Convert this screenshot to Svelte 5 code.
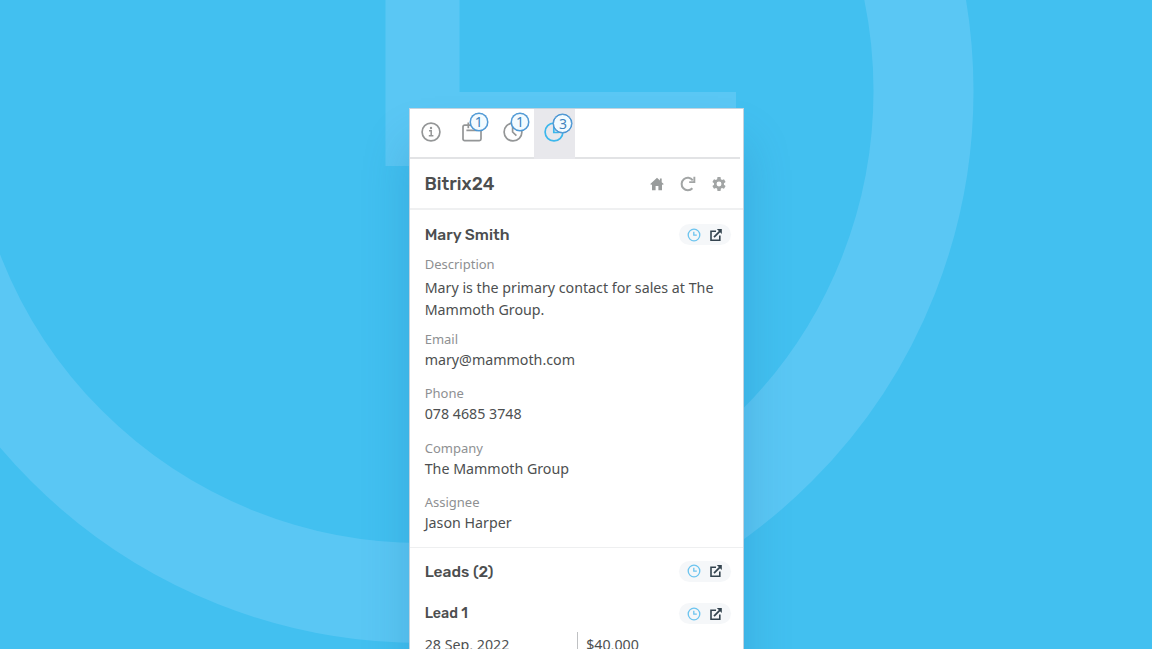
<script>
  const tabs = [
    { icon: 'info' },
    { icon: 'calendar', count: 1 },
    { icon: 'clock', count: 1 },
    { icon: 'clock', count: 3, active: true }
  ];
  const fields = [
    { label: 'Email', value: 'mary@mammoth.com' },
    { label: 'Phone', value: '078 4685 3748' },
    { label: 'Company', value: 'The Mammoth Group' },
    { label: 'Assignee', value: 'Jason Harper' }
  ];
</script>

{#snippet actions()}
  <div class="actions">
    <svg width="14" height="14" viewBox="0 0 14 14" fill="none" stroke="#6cc4ef" stroke-width="1.3">
      <circle cx="7" cy="7" r="5.8" />
      <path d="M6.8 3.8v3.4h3" />
    </svg>
    <svg width="14" height="14" viewBox="0 0 14 14" fill="none" stroke="#34444f" stroke-width="1.6">
      <path d="M7 3.2H2v9h8.8V7.6" />
      <path d="M5 9.2l6-6" stroke-width="1.8" />
      <path d="M7.8 1h5v5z" fill="#34444f" stroke="none" />
    </svg>
  </div>
{/snippet}

<main class="stage">
  <svg class="backdrop" width="1152" height="649" viewBox="0 0 1152 649" fill="none">
    <circle cx="421.5" cy="91" r="502" stroke="#5ac7f4" stroke-width="100" />
    <path d="M385.5 0H459.5V92H736V166H385.5z" fill="#5ac7f4" />
  </svg>

  <section class="card">
    <nav class="tabs">
      {#each tabs as tab}
        <div class="tab" class:active={tab.active}>
          <div class="glyph">
            <svg width="22" height="22" viewBox="0 0 22 22" fill="none" stroke="currentColor" stroke-width="1.7">
              {#if tab.icon === 'info'}
                <circle cx="11" cy="11" r="8.9" />
                <path d="M9 9.7h2.2v5.1M8.800 14.800h4.600" stroke-width="1.5" />
                <circle cx="11" cy="7" r="1.2" fill="currentColor" stroke="none" />
              {:else if tab.icon === 'calendar'}
                <rect x="2" y="4.2" width="18" height="15.5" rx="1.6" />
                <path d="M7.300 1.400v5.800M15.400 1.400v5.200M5.400 9.400h11.200" />
              {:else}
                <circle cx="11" cy="11" r="8.9" />
                {#if tab.active}
                  <path d="M10.800 5.200v6.300h5" />
                {:else}
                  <path d="M10.600 5.200v5.800l3.800 3.600" />
                {/if}
              {/if}
            </svg>
            {#if tab.count}<span class="badge">{tab.count}</span>{/if}
          </div>
        </div>
      {/each}
    </nav>

    <header class="bar">
      <h1>Bitrix24</h1>
      <div class="tools">
        <svg width="14" height="14" viewBox="0 0 14 14" fill="#999c9c">
          <path d="M7 .8L.3 7.100l.8.9.9-.7v5.900h3.600V9h2.800v4.200H12V7.300l.9.7.8-.9-2-1.900V1.600H9.900v1.900z" />
        </svg>
        <svg width="16" height="16" viewBox="0 0 16 16" fill="none" stroke="#a2a5a5" stroke-width="2">
          <path d="M12.400 12.200A6.200 6.200 0 1 1 12.800 4.300" />
          <path d="M15.300.8v6.300H9.200V5.300h4.200V.8z" fill="#a2a5a5" stroke="none" />
        </svg>
        <svg width="16" height="16" viewBox="0 0 24 24" fill="#a2a5a5">
          <path d="M19.400 13a7.500 7.500 0 0 0 0-2l2.500-2-2.400-4.200-3 1.200a7 7 0 0 0-1.700-1L14.300 1.500H9.700L9.200 5a7 7 0 0 0-1.700 1l-3-1.200L2.100 9l2.500 2a7.500 7.500 0 0 0 0 2l-2.500 2 2.400 4.200 3-1.200a7 7 0 0 0 1.700 1l.5 3.500h4.600l.5-3.500a7 7 0 0 0 1.700-1l3 1.200 2.400-4.200zM12 15.700a3.700 3.700 0 1 1 0-7.400 3.700 3.700 0 0 1 0 7.400z" />
        </svg>
      </div>
    </header>

    <section class="contact">
      <div class="row">
        <h2>Mary Smith</h2>
        {@render actions()}
      </div>
      <div class="field description">
        <span class="label">Description</span>
        <p class="value">Mary is the primary contact for sales at The Mammoth Group.</p>
      </div>
      {#each fields as field}
        <div class="field">
          <span class="label">{field.label}</span>
          <p class="value">{field.value}</p>
        </div>
      {/each}
    </section>

    <section class="leads">
      <div class="row">
        <h2>Leads (2)</h2>
        {@render actions()}
      </div>
      <div class="row lead">
        <h3>Lead 1</h3>
        {@render actions()}
      </div>
      <div class="detail">
        <span>28 Sep, 2022</span>
        <span class="amount">$40,000</span>
      </div>
    </section>
  </section>
</main>

<style>
  :global(body) { margin: 0; overflow: hidden; }
  .stage {
    position: relative;
    box-sizing: border-box;
    width: 1152px;
    height: 649px;
    padding: 108px 0 0 409px;
    overflow: hidden;
    background: #42c0f0;
    font-family: "Noto Sans", sans-serif;
    color: #4d4f50;
  }
  .backdrop { position: absolute; inset: 0; }
  .card {
    position: relative;
    box-sizing: border-box;
    width: 335px;
    height: 620px;
    border: 1px solid #c3d3df;
    background: #fff;
    box-shadow: 0 36px 44px rgba(25, 90, 150, 0.22);
  }
  .tabs {
    display: flex;
    width: 330px;
    height: 48px;
    border-bottom: 2px solid #e2e3e5;
  }
  .tab {
    display: flex;
    justify-content: center;
    width: 41.4px;
    height: 50px;
    color: #949697;
  }
  .tab:first-child { width: 41px; }
  .tab.active { background: #e8e8ec; color: #3cb7ec; }
  .glyph { position: relative; width: 22px; height: 22px; margin-top: 12.4px; }
  .glyph svg { display: block; }
  .badge {
    position: absolute;
    left: 9px;
    top: -8px;
    box-sizing: border-box;
    width: 18px;
    height: 18px;
    border: 1.5px solid #4a96d4;
    border-radius: 50%;
    background: #f3fbff;
    box-shadow: 0 0 0 0.5px #4a96d4;
    color: #3f83bd;
    font-size: 14px;
    line-height: 16px;
    text-align: center;
  }
  .active .badge { left: 10px; top: -7px; width: 19px; height: 19px; line-height: 17px; }
  h1, h2, h3, p { margin: 0; }
  h1, h2, h3 { font-family: Rubik, Roboto, sans-serif; font-weight: 500; color: #4c4e4f; }
  h1 { font-size: 18px; }
  h2 { font-size: 15.6px; }
  h3 { font-size: 14.3px; }
  .bar {
    display: flex;
    align-items: center;
    justify-content: space-between;
    height: 49px;
    padding: 0 16px 0 14.5px;
    border-bottom: 2px solid #eff0f1;
  }
  .tools { display: flex; align-items: center; gap: 15.5px; }
  .tools svg, .actions svg { display: block; }
  .contact { padding: 9.5px 12px 13px 14.7px; border-bottom: 1px solid #eeeff0; }
  .row { display: flex; align-items: center; justify-content: space-between; height: 30px; }
  .actions {
    display: flex;
    align-items: center;
    justify-content: center;
    gap: 8px;
    width: 52px;
    height: 21px;
    border-radius: 11px;
    background: #f5f7f9;
  }
  .field { margin-bottom: 12.4px; }
  .field:last-child { margin-bottom: 0; }
  .label { display: block; font-size: 13px; line-height: 20px; color: #8e9092; }
  .value { font-size: 14.24px; line-height: 22px; }
  .description { margin: 4px 0 8px; }
  .description .value { margin-top: 3.5px; }
  .leads { padding: 8px 12px 0 14.7px; }
  .lead { margin-top: 12.5px; }
  .detail { display: flex; margin-top: 3.5px; font-size: 14.24px; line-height: 26px; }
  .detail span { flex: none; width: 152.5px; }
  .detail .amount { padding-left: 8px; border-left: 1px solid #bfc1c3; }
</style>
